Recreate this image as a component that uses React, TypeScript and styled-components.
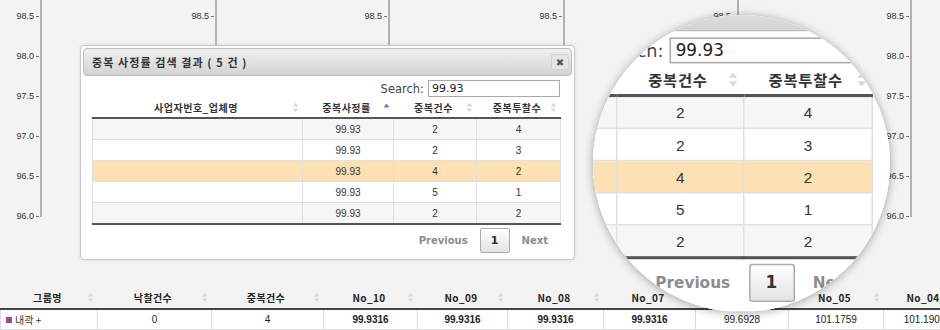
import React from 'react';
import styled, { createGlobalStyle } from 'styled-components';

const KR = `"Noto Sans CJK KR", "Noto Sans", sans-serif`;
const NUM = `"Liberation Sans", Arial, sans-serif`;
const UI = `"DejaVu Sans", Verdana, sans-serif`;

const Global = createGlobalStyle`
  html, body { margin: 0; padding: 0; background: #f3f3f3; }
  body { width: 940px; height: 330px; overflow: hidden; font-family: ${KR}; }
`;

const Stage = styled.div`
  position: relative;
  width: 940px;
  height: 330px;
  overflow: hidden;
  background: #f3f3f3;
  display: flex;
  flex-direction: column;
`;

/* ---------- chart axes ---------- */
const ChartRow = styled.div`
  display: grid;
  grid-template-columns: 42px 175px 173px 175px 174px 173px 1fr;
  height: 224px;
  flex: none;
`;
const AxisPanel = styled.div`
  display: flex;
  justify-content: flex-end;
  align-items: flex-start;
`;
const LabelCol = styled.div`
  display: flex;
  flex-direction: column;
  gap: 28px;
  padding-top: 10px;
  margin-right: 1px;
`;
const Label = styled.div`
  display: flex;
  align-items: center;
  justify-content: flex-end;
  gap: 2px;
  height: 12px;
  font: 9px ${NUM};
  color: #333;
  &::after {
    content: '';
    width: 3px;
    height: 1px;
    background: #777;
  }
`;
const AxisLine = styled.div`
  width: 2px;
  height: 217px;
  background: #b2b2b2;
`;

const ticks = ['98.5', '98.0', '97.5', '97.0', '96.5', '96.0'];

const Axis = () => (
  <AxisPanel>
    <LabelCol>
      {ticks.map((t) => (
        <Label key={t}>{t}</Label>
      ))}
    </LabelCol>
    <AxisLine />
  </AxisPanel>
);

/* ---------- sort icon ---------- */
const SortIcon = ({ mode = 'both' }: { mode?: 'both' | 'asc' }) => (
  <svg width="7" height="11" viewBox="0 0 7 11">
    {mode === 'both' ? (
      <>
        <path d="M3.5 0.8 L6.3 4.4 H0.7Z" fill="#d9d9d9" />
        <path d="M3.5 10.2 L6.3 6.6 H0.7Z" fill="#d9d9d9" />
      </>
    ) : (
      <path d="M3.5 1.5 L6.5 5.5 H0.5Z" fill="#7479c8" />
    )}
  </svg>
);

/* ---------- bottom grid table ---------- */
const BottomTable = styled.table`
  margin-top: 62px;
  border-collapse: collapse;
  table-layout: fixed;
  width: 965px;
  flex: none;
`;
const BHead = styled.th`
  height: 22px;
  padding: 0;
  font: bold 10px ${KR};
  letter-spacing: 0.4px;
  color: #222;
  border-bottom: 2px solid #444;
`;
const HeadInner = styled.div`
  display: grid;
  grid-template-columns: 1fr 7px;
  align-items: center;
  padding: 0 4px 0 8px;
`;
const HeadText = styled.span`
  text-align: center;
  white-space: nowrap;
`;
const BCell = styled.td<{ $bold?: boolean; $left?: boolean }>`
  height: 19px;
  padding: 0 5px;
  background: #fff;
  border: 1px solid #dcdcdc;
  border-top: none;
  font: ${(p) => (p.$bold ? 'bold' : 'normal')} 10px ${NUM};
  color: #222;
  text-align: ${(p) => (p.$left ? 'left' : 'center')};
  white-space: nowrap;
  overflow: hidden;
`;
const GroupName = styled.span`
  display: inline-flex;
  align-items: center;
  gap: 3px;
  font: 10px ${KR};
  color: #333;
  &::before {
    content: '';
    width: 6px;
    height: 6px;
    background: #9a4a86;
  }
`;

const bottomCols = [
  { w: 97, h: '그룹명' },
  { w: 114, h: '낙찰건수' },
  { w: 112, h: '중복건수' },
  { w: 94, h: 'No_10' },
  { w: 90, h: 'No_09' },
  { w: 96, h: 'No_08' },
  { w: 92, h: 'No_07' },
  { w: 93, h: 'No_06' },
  { w: 95, h: 'No_05' },
  { w: 82, h: 'No_04' },
];
const bottomVals: { v: string; bold?: boolean }[] = [
  { v: '0' },
  { v: '4' },
  { v: '99.9316', bold: true },
  { v: '99.9316', bold: true },
  { v: '99.9316', bold: true },
  { v: '99.9316', bold: true },
  { v: '99.6928' },
  { v: '101.1759' },
  { v: '101.1908' },
];

/* ---------- dialog ---------- */
const DialogBox = styled.div`
  position: absolute;
  left: 80px;
  top: 45px;
  width: 495px;
  height: 215px;
  box-sizing: border-box;
  background: #fff;
  border: 1px solid #c9c9c9;
  border-radius: 4px;
  padding: 2px;
  box-shadow: 0 0 3px rgba(0, 0, 0, 0.12);
  display: flex;
  flex-direction: column;
`;
const TitleBar = styled.div`
  height: 28px;
  box-sizing: border-box;
  border: 1px solid #bcbcbc;
  border-radius: 4px;
  background: linear-gradient(#f0f0f0, #d3d3d3);
  display: flex;
  align-items: center;
  justify-content: space-between;
  padding: 0 2px 0 8px;
  flex: none;
`;
const Title = styled.span`
  font: bold 11px ${KR};
  letter-spacing: 1.1px;
  color: #333;
`;
const CloseBtn = styled.span`
  width: 18px;
  height: 16px;
  box-sizing: border-box;
  border: 1px solid #d0d0d0;
  border-radius: 2px;
  background: #e4e4e4;
  display: flex;
  align-items: center;
  justify-content: center;
  font: bold 10px ${UI};
  color: #555;
`;
const Body = styled.div`
  display: flex;
  flex-direction: column;
  padding: 0 12px 0 9px;
`;
const SearchRow = styled.div`
  display: flex;
  justify-content: flex-end;
  align-items: center;
  gap: 4px;
  margin-top: 4px;
  height: 17px;
`;
const SearchLabel = styled.span`
  font: 11.5px ${UI};
  color: #444;
`;
const SearchInput = styled.div`
  width: 132px;
  height: 17px;
  box-sizing: border-box;
  border: 1px solid #a9a9a9;
  padding: 0 3px;
  display: flex;
  align-items: center;
  font: 11px ${UI};
  color: #222;
  background: #fff;
`;
const DTable = styled.table`
  border-collapse: collapse;
  table-layout: fixed;
  width: 468px;
`;
const DHead = styled.th`
  height: 20px;
  padding: 0;
  font: bold 10px ${KR};
  letter-spacing: 0.5px;
  color: #333;
  border-bottom: 2px solid #555;
`;
const DRow = styled.tr<{ $tone: 'odd' | 'even' | 'hl' }>`
  background: ${(p) => (p.$tone === 'hl' ? '#fde1b2' : p.$tone === 'odd' ? '#f6f6f6' : '#ffffff')};
`;
const DCell = styled.td`
  height: 20px;
  padding: 0;
  border: 1px solid #e0e0e0;
  text-align: center;
  font: 10px ${NUM};
  color: #333;
`;
const DFoot = styled.tr`
  & > td {
    height: 0;
    padding: 0;
    border-top: 2px solid #555;
  }
`;
const Pager = styled.div`
  display: flex;
  justify-content: flex-end;
  align-items: center;
  gap: 12px;
  margin-top: 3px;
  padding-right: 12px;
`;
const PageLink = styled.span`
  font: bold 10px ${UI};
  color: #8c8c8c;
`;
const PageBtn = styled.span`
  width: 30px;
  height: 25px;
  box-sizing: border-box;
  border: 1px solid #aaa;
  border-radius: 2px;
  background: linear-gradient(#ffffff, #e3e3e3);
  display: flex;
  align-items: center;
  justify-content: center;
  font: bold 11px ${UI};
  color: #333;
`;

const dCols = [
  { w: 210, h: '사업자번호_업체명', icon: 'both' as const },
  { w: 91, h: '중복사정률', icon: 'asc' as const },
  { w: 83, h: '중복건수', icon: 'both' as const },
  { w: 84, h: '중복투찰수', icon: 'both' as const },
];
const dRows: { a: string; b: string; tone: 'odd' | 'even' | 'hl' }[] = [
  { a: '2', b: '4', tone: 'odd' },
  { a: '2', b: '3', tone: 'even' },
  { a: '4', b: '2', tone: 'hl' },
  { a: '5', b: '1', tone: 'even' },
  { a: '2', b: '2', tone: 'odd' },
];

const Dialog = () => (
  <DialogBox>
    <TitleBar>
      <Title>중복 사정률 검색 결과 ( 5 건 )</Title>
      <CloseBtn>✖</CloseBtn>
    </TitleBar>
    <Body>
      <SearchRow>
        <SearchLabel>Search:</SearchLabel>
        <SearchInput>99.93</SearchInput>
      </SearchRow>
      <DTable>
        <colgroup>
          {dCols.map((c) => (
            <col key={c.h} style={{ width: c.w }} />
          ))}
        </colgroup>
        <thead>
          <tr>
            {dCols.map((c) => (
              <DHead key={c.h}>
                <HeadInner>
                  <HeadText>{c.h}</HeadText>
                  <SortIcon mode={c.icon} />
                </HeadInner>
              </DHead>
            ))}
          </tr>
        </thead>
        <tbody>
          {dRows.map((r, i) => (
            <DRow key={i} $tone={r.tone}>
              <DCell />
              <DCell>99.93</DCell>
              <DCell>{r.a}</DCell>
              <DCell>{r.b}</DCell>
            </DRow>
          ))}
          <DFoot>
            <td colSpan={4} />
          </DFoot>
        </tbody>
      </DTable>
      <Pager>
        <PageLink>Previous</PageLink>
        <PageBtn>1</PageBtn>
        <PageLink>Next</PageLink>
      </Pager>
    </Body>
  </DialogBox>
);

/* ---------- magnifier lens ---------- */
const Lens = styled.div`
  position: absolute;
  left: 593px;
  top: 15px;
  width: 297px;
  height: 297px;
  border-radius: 50%;
  overflow: hidden;
  background: #fff;
  box-shadow: 0 1px 10px rgba(0, 0, 0, 0.35);
`;
const LensScene = styled.div`
  position: absolute;
  left: 0;
  top: 0;
  width: 940px;
  height: 330px;
  background: #f3f3f3;
  transform-origin: 0 0;
  transform: translate(-578.3px, -100px) scale(1.53);
`;

export default function App() {
  return (
    <>
      <Global />
      <Stage>
        <ChartRow>
          <Axis />
          <Axis />
          <Axis />
          <Axis />
          <Axis />
          <Axis />
          <div />
        </ChartRow>
        <BottomTable>
          <colgroup>
            {bottomCols.map((c) => (
              <col key={c.h} style={{ width: c.w }} />
            ))}
          </colgroup>
          <thead>
            <tr>
              {bottomCols.map((c) => (
                <BHead key={c.h}>
                  <HeadInner>
                    <HeadText>{c.h}</HeadText>
                    <SortIcon />
                  </HeadInner>
                </BHead>
              ))}
            </tr>
          </thead>
          <tbody>
            <tr>
              <BCell $left>
                <GroupName>내곽 +</GroupName>
              </BCell>
              {bottomVals.map((v, i) => (
                <BCell key={i} $bold={v.bold}>
                  {v.v}
                </BCell>
              ))}
            </tr>
          </tbody>
        </BottomTable>
        <Dialog />
        <Lens>
          <LensScene>
            <Dialog />
          </LensScene>
        </Lens>
      </Stage>
    </>
  );
}
